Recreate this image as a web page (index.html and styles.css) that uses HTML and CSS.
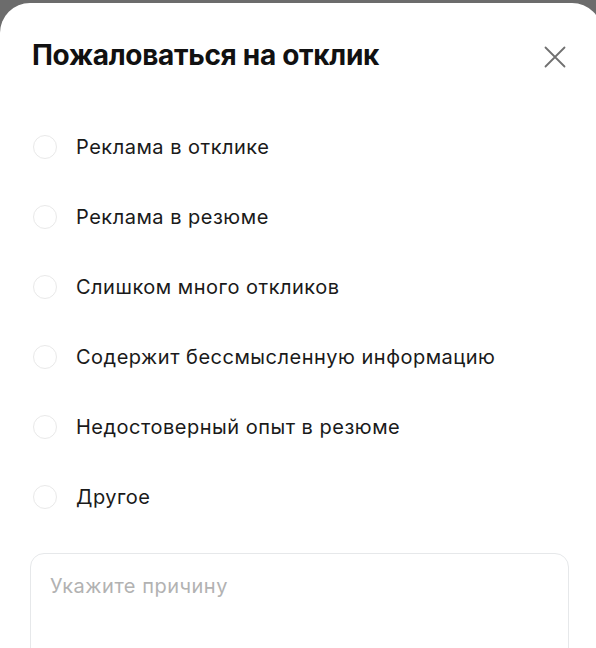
FILE: index.html
```html
<!DOCTYPE html>
<html lang="ru">
<head>
<meta charset="utf-8">
<title>Пожаловаться на отклик</title>
<link rel="stylesheet" href="styles.css">
</head>
<body>
<div class="sheet">
  <header class="sheet-head">
    <h1 class="sheet-title">Пожаловаться на отклик</h1>
    <button class="close" type="button" aria-label="Закрыть">
      <svg width="22" height="22" viewBox="0 0 22 22" fill="none">
        <path d="M1.5 1.5L20.5 20.5M20.5 1.5L1.5 20.5" stroke="#707070" stroke-width="1.8" stroke-linecap="round"/>
      </svg>
    </button>
  </header>
  <ul class="options">
    <li class="option"><span class="radio"></span><span class="label">Реклама в отклике</span></li>
    <li class="option"><span class="radio"></span><span class="label">Реклама в резюме</span></li>
    <li class="option"><span class="radio"></span><span class="label">Слишком много откликов</span></li>
    <li class="option"><span class="radio"></span><span class="label">Содержит бессмысленную информацию</span></li>
    <li class="option"><span class="radio"></span><span class="label">Недостоверный опыт в резюме</span></li>
    <li class="option"><span class="radio"></span><span class="label">Другое</span></li>
  </ul>
  <div class="reason">
    <span class="placeholder">Укажите причину</span>
  </div>
</div>
</body>
</html>
```

FILE: styles.css
```css
html, body {
  margin: 0;
  padding: 0;
  height: 100%;
  overflow: hidden;
}

body {
  background: #6c6c6c;
  font-family: Inter, "Noto Sans", sans-serif;
  color: #1f1f1f;
}

.sheet {
  margin-top: 3px;
  width: 602px;
  height: 700px;
  background: #fff;
  border-radius: 30px 30px 0 0;
  box-sizing: border-box;
  padding: 0 33px 0 30px;
}

.sheet-head {
  display: flex;
  align-items: flex-start;
  justify-content: space-between;
  padding-top: 34px;
  height: 36px;
}

.sheet-title {
  margin: 0 0 0 2px;
  font-size: 28px;
  font-weight: 700;
  letter-spacing: -0.3px;
  color: #111;
  line-height: 36px;
}

.close {
  border: 0;
  background: none;
  padding: 0;
  margin: 9px 3px 0 0;
  width: 22px;
  height: 22px;
  display: flex;
}

.options {
  list-style: none;
  margin: 57px 0 0;
  padding: 0;
  display: flex;
  flex-direction: column;
  gap: 36px;
}

.option {
  display: flex;
  align-items: center;
  height: 34px;
  gap: 19px;
  padding-left: 3px;
}

.radio {
  width: 24px;
  height: 24px;
  box-sizing: border-box;
  border: 1.5px solid #e9e9e9;
  border-radius: 50%;
  flex: none;
}

.label {
  font-size: 20px;
  letter-spacing: 0.5px;
  line-height: 24px;
  color: #1a1a1a;
}

.reason {
  margin-top: 39px;
  width: 539px;
  height: 140px;
  box-sizing: border-box;
  border: 1px solid #e6e8ea;
  border-radius: 14px;
  padding: 20px 19px;
}

.placeholder {
  font-size: 20px;
  letter-spacing: 0.5px;
  line-height: 24px;
  color: #b2b2b2;
}
```
